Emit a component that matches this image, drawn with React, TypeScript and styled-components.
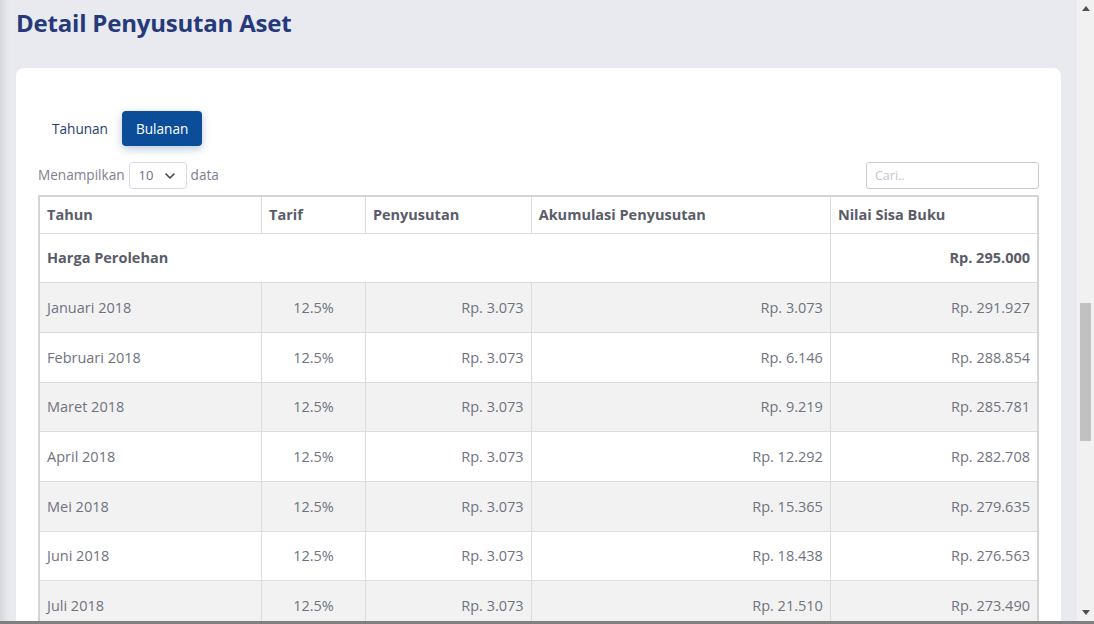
import React from "react";
import styled, { createGlobalStyle } from "styled-components";

const Global = createGlobalStyle`
  html, body { margin: 0; padding: 0; height: 624px; overflow: hidden; }
  body { font-family: "Open Sans", "Noto Sans", sans-serif; }
  * { box-sizing: border-box; }
`;

const Frame = styled.div`
  display: flex;
  height: 624px;
  overflow: hidden;
  border-bottom: 3px solid #808080;
`;

const Main = styled.main`
  flex: 1;
  min-width: 0;
  background: #e8eaef;
  padding: 0 16px;
  overflow: hidden;
  box-shadow: inset 10px 0 10px -8px rgba(0, 0, 0, 0.12);
`;

const Title = styled.h1`
  margin: 0;
  padding-top: 8px;
  font-size: 24px;
  line-height: 29px;
  font-weight: 700;
  color: #26397a;
  letter-spacing: -0.2px;
`;

const Card = styled.section`
  margin-top: 31px;
  background: #fff;
  border-radius: 8px 8px 0 0;
  padding: 43px 22px 0 22px;
  min-height: 600px;
`;

const Tabs = styled.nav`
  display: flex;
  align-items: center;
  height: 35px;
`;

const Tab = styled.button<{ $active?: boolean }>`
  font-family: inherit;
  font-size: 13.6px;
  height: 35px;
  padding: 0 14px;
  border: none;
  border-radius: 4px;
  cursor: pointer;
  color: ${(p) => (p.$active ? "#fff" : "#1f3c72")};
  background: ${(p) => (p.$active ? "#0b4d99" : "transparent")};
  box-shadow: ${(p) => (p.$active ? "0 3px 8px rgba(11, 77, 153, 0.3)" : "none")};
`;

const Controls = styled.div`
  display: flex;
  align-items: center;
  justify-content: space-between;
  margin-top: 16px;
  height: 27px;
`;

const Length = styled.label`
  display: flex;
  align-items: center;
  gap: 4px;
  font-size: 13.6px;
  line-height: 27px;
  color: #7e8090;
  margin-top: -2px;
`;

const SelectBox = styled.div`
  display: flex;
  align-items: center;
  justify-content: space-between;
  width: 58px;
  height: 27px;
  margin-top: 2px;
  padding: 0 11px 0 9px;
  border: 1px solid #d8dbe5;
  border-radius: 4px;
  font-size: 13px;
  color: #6e707e;
`;

const Search = styled.input`
  width: 173px;
  height: 27px;
  border: 1px solid #c9cbd2;
  border-radius: 3px;
  padding: 0 8px;
  font-family: inherit;
  font-size: 12.5px;
  color: #6e707e;
  &::placeholder { color: #c3c5cc; }
`;

const Table = styled.table`
  margin-top: 6px;
  width: 1001px;
  border-collapse: collapse;
  border: 2px solid #d4d4d4;
  font-size: 14.5px;
  color: #6f7380;
`;

const Th = styled.th`
  height: 37px;
  padding: 0 7px;
  text-align: left;
  font-weight: 700;
  color: #5a5c69;
  border: 1px solid #dcdcdc;
`;

const Row = styled.tr<{ $striped?: boolean }>`
  height: 49.7px;
  background: ${(p) => (p.$striped ? "#f2f2f2" : "#fff")};
`;

const Td = styled.td<{ $align?: "left" | "center" | "right"; $bold?: boolean }>`
  padding: 0 7px;
  vertical-align: middle;
  text-align: ${(p) => p.$align || "left"};
  font-weight: ${(p) => (p.$bold ? 700 : 400)};
  color: ${(p) => (p.$bold ? "#5a5c69" : "#6f7380")};
  border: 1px solid #dcdcdc;
  white-space: nowrap;
`;

const Scrollbar = styled.aside`
  width: 17px;
  flex: none;
  background: #f1f1f1;
  display: flex;
  flex-direction: column;
  align-items: center;
`;

const Arrow = styled.div`
  height: 17px;
  display: flex;
  align-items: center;
  justify-content: center;
`;

const Track = styled.div`
  flex: 1;
  width: 100%;
  display: flex;
  flex-direction: column;
  align-items: center;
  padding-top: 286px;
`;

const Thumb = styled.div`
  width: 11px;
  height: 138px;
  background: #c1c1c1;
`;

const rows: [string, string, string][] = [
  ["Januari 2018", "Rp. 3.073", "Rp. 291.927"],
  ["Februari 2018", "Rp. 6.146", "Rp. 288.854"],
  ["Maret 2018", "Rp. 9.219", "Rp. 285.781"],
  ["April 2018", "Rp. 12.292", "Rp. 282.708"],
  ["Mei 2018", "Rp. 15.365", "Rp. 279.635"],
  ["Juni 2018", "Rp. 18.438", "Rp. 276.563"],
  ["Juli 2018", "Rp. 21.510", "Rp. 273.490"],
];

export default function App() {
  return (
    <>
      <Global />
      <Frame>
        <Main>
          <Title>Detail Penyusutan Aset</Title>
          <Card>
            <Tabs>
              <Tab>Tahunan</Tab>
              <Tab $active>Bulanan</Tab>
            </Tabs>
            <Controls>
              <Length>
                Menampilkan
                <SelectBox>
                  <span>10</span>
                  <svg width="10" height="6" viewBox="0 0 10 6" fill="none">
                    <path d="M1 1l4 4 4-4" stroke="#444" strokeWidth="1.6" strokeLinecap="round" strokeLinejoin="round" />
                  </svg>
                </SelectBox>
                data
              </Length>
              <Search placeholder="Cari.." />
            </Controls>
            <Table>
              <colgroup>
                <col style={{ width: 223 }} />
                <col style={{ width: 104 }} />
                <col style={{ width: 166 }} />
                <col style={{ width: 300 }} />
                <col style={{ width: 208 }} />
              </colgroup>
              <thead>
                <tr>
                  <Th>Tahun</Th>
                  <Th>Tarif</Th>
                  <Th>Penyusutan</Th>
                  <Th>Akumulasi Penyusutan</Th>
                  <Th>Nilai Sisa Buku</Th>
                </tr>
              </thead>
              <tbody>
                <Row>
                  <Td colSpan={4} $bold>Harga Perolehan</Td>
                  <Td $align="right" $bold>Rp. 295.000</Td>
                </Row>
                {rows.map(([m, acc, rest], i) => (
                  <Row key={m} $striped={i % 2 === 0}>
                    <Td>{m}</Td>
                    <Td $align="center">12.5%</Td>
                    <Td $align="right">Rp. 3.073</Td>
                    <Td $align="right">{acc}</Td>
                    <Td $align="right">{rest}</Td>
                  </Row>
                ))}
              </tbody>
            </Table>
          </Card>
        </Main>
        <Scrollbar>
          <Arrow>
            <svg width="8" height="5" viewBox="0 0 8 5"><path d="M0 5L4 0 8 5z" fill="#505050" /></svg>
          </Arrow>
          <Track>
            <Thumb />
          </Track>
          <Arrow>
            <svg width="8" height="5" viewBox="0 0 8 5"><path d="M0 0L4 5 8 0z" fill="#505050" /></svg>
          </Arrow>
        </Scrollbar>
      </Frame>
    </>
  );
}
